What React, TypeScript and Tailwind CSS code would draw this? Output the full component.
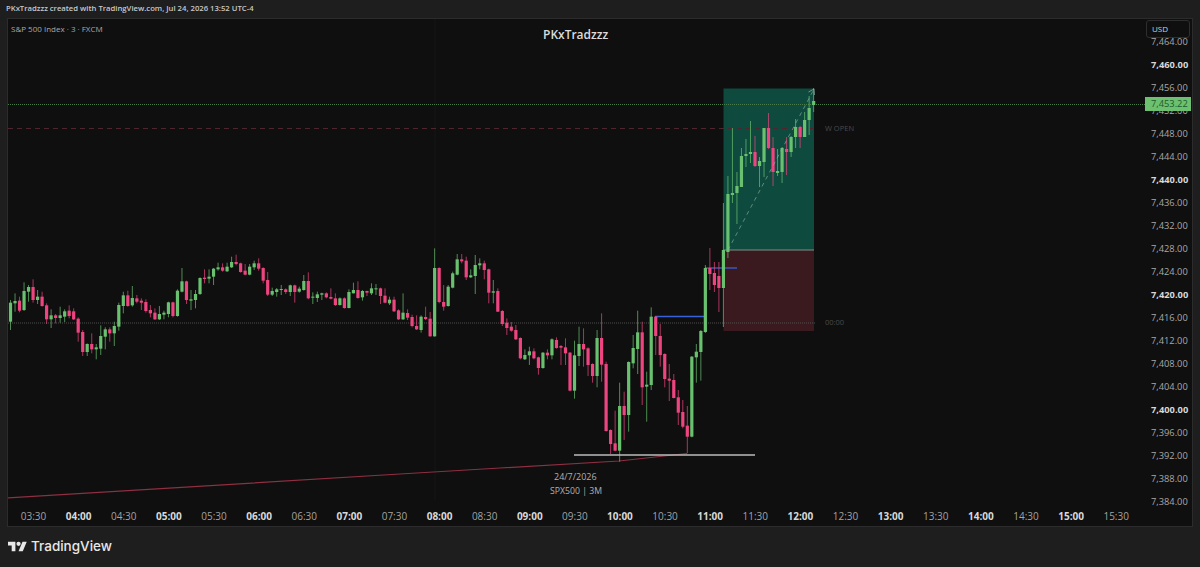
// [high, bodyTop, bodyBottom, low, up] in thirds of a pixel, from the y offset of each block
type Candle = [number, number, number, number, number];

const morning: Candle[] = [
	[245, 245, 265, 275, 1], [180, 188, 245, 270, 1], [160, 183, 190, 215, 1], [170, 182, 212, 217, 0],
	[127, 153, 210, 213, 1], [135, 141, 155, 185, 1], [118, 141, 180, 188, 0], [150, 170, 180, 192, 1],
	[155, 170, 198, 200, 0], [190, 196, 238, 252, 0], [208, 226, 238, 264, 1], [222, 226, 234, 250, 0],
	[200, 226, 234, 248, 1], [208, 214, 230, 246, 1], [196, 212, 228, 235, 0], [205, 214, 238, 240, 0],
	[232, 236, 278, 305, 0], [270, 276, 336, 348, 0], [310, 312, 336, 348, 1], [280, 312, 328, 340, 0],
	[312, 322, 328, 358, 1], [256, 288, 326, 345, 1], [262, 268, 290, 328, 1], [262, 268, 280, 305, 0],
	[245, 258, 280, 318, 1], [188, 195, 260, 272, 1], [155, 166, 198, 220, 1], [152, 166, 198, 200, 0],
	[138, 174, 196, 200, 1], [165, 175, 185, 190, 0], [175, 182, 188, 210, 0], [178, 186, 213, 218, 0],
	[195, 210, 220, 232, 0], [205, 218, 238, 240, 0], [198, 222, 238, 240, 1], [212, 218, 224, 238, 1],
	[185, 187, 222, 232, 1], [185, 187, 228, 232, 0], [148, 152, 228, 230, 1], [84, 124, 155, 157, 1],
	[122, 124, 180, 192, 0], [150, 178, 182, 210, 1], [150, 162, 180, 205, 1], [112, 114, 162, 165, 1],
	[88, 113, 117, 130, 0], [88, 110, 116, 130, 1], [84, 86, 110, 135, 1], [68, 82, 88, 92, 1],
	[70, 82, 92, 95, 0], [68, 80, 94, 96, 1], [50, 66, 82, 84, 1], [44, 66, 72, 76, 0],
	[68, 70, 96, 98, 0], [72, 92, 104, 106, 0], [72, 80, 104, 106, 1], [62, 70, 82, 90, 1],
	[55, 70, 86, 92, 0], [82, 84, 122, 130, 0], [96, 120, 164, 168, 0], [143, 153, 164, 168, 1],
	[144, 148, 156, 170, 1], [135, 147, 150, 165, 1], [145, 148, 156, 162, 0], [134, 136, 156, 168, 1],
	[134, 136, 156, 188, 0], [140, 146, 155, 158, 1], [105, 123, 150, 152, 1], [97, 123, 175, 178, 0],
	[157, 170, 172, 192, 1], [155, 163, 174, 186, 1], [158, 160, 164, 180, 1], [157, 160, 172, 175, 0],
	[145, 171, 176, 178, 0], [160, 175, 195, 198, 0], [172, 175, 195, 197, 1], [172, 175, 204, 206, 0],
	[148, 156, 204, 205, 1], [128, 150, 160, 160, 1], [124, 150, 174, 176, 0], [150, 153, 172, 182, 1],
	[152, 153, 158, 168, 0], [130, 145, 160, 165, 1], [132, 145, 147, 165, 1], [143, 145, 168, 192, 0],
	[145, 167, 188, 190, 0], [170, 179, 190, 195, 1], [170, 179, 214, 216, 0], [208, 211, 238, 240, 0],
	[160, 218, 238, 240, 1], [208, 219, 233, 240, 0], [224, 231, 258, 262, 0], [226, 258, 268, 270, 0],
	[226, 230, 270, 278, 1], [200, 231, 237, 240, 0], [216, 236, 289, 290, 0], [25, 84, 289, 290, 1],
	[82, 84, 186, 190, 0], [135, 186, 200, 212, 0], [135, 140, 198, 200, 1], [95, 100, 143, 145, 1],
	[42, 58, 104, 106, 1], [42, 58, 64, 70, 0], [50, 62, 112, 120, 0], [88, 106, 112, 114, 1],
	[45, 75, 108, 162, 1], [55, 70, 76, 88, 1], [62, 70, 90, 118, 0], [86, 88, 158, 190, 0],
	[120, 154, 158, 190, 1], [145, 153, 215, 216, 0],
];

const midday: Candle[] = [
	[30, 33, 72, 78, 0], [55, 68, 84, 105, 0], [66, 80, 92, 95, 0], [75, 90, 118, 120, 0],
	[112, 114, 175, 178, 0], [148, 165, 178, 180, 1], [140, 154, 166, 195, 1], [145, 154, 175, 178, 0],
	[170, 172, 204, 224, 0], [156, 158, 204, 206, 1], [148, 158, 166, 178, 0], [115, 118, 166, 178, 1],
	[112, 120, 144, 146, 0], [135, 138, 143, 195, 0], [115, 142, 160, 195, 0], [156, 158, 272, 274, 0],
	[122, 166, 272, 296, 1], [80, 132, 168, 198, 1], [85, 132, 148, 200, 0], [142, 145, 195, 228, 0],
	[190, 192, 228, 248, 0], [90, 114, 228, 262, 1], [40, 114, 194, 245, 0], [185, 192, 393, 395, 0],
	[388, 390, 432, 462, 0], [332, 430, 452, 454, 0], [248, 318, 452, 485, 1], [275, 318, 345, 420, 0],
	[184, 186, 345, 395, 1], [105, 144, 190, 205, 1], [32, 97, 147, 222, 1], [65, 97, 262, 315, 0],
	[215, 254, 260, 365, 1], [22, 50, 255, 270, 1], [48, 50, 108, 165, 0], [72, 108, 165, 200, 0],
	[160, 162, 237, 262, 0], [192, 236, 242, 303, 0], [222, 240, 294, 295, 0], [270, 292, 338, 375, 0],
	[300, 336, 380, 385, 0], [318, 377, 410, 460, 0], [168, 170, 410, 412, 1], [132, 155, 172, 248, 1],
	[90, 93, 156, 242, 1],
];

// from the breakout on, plain page pixels
const breakout: Candle[] = [
	[265, 268, 332, 333, 1], [248, 268, 274, 290, 0], [262, 273, 285, 292, 0], [262, 276, 288, 312, 0],
	[203, 250, 288, 327, 1], [176, 194, 252, 258, 1], [128, 193, 195, 203, 1], [172, 186, 193, 224, 1],
	[148, 156, 187, 187, 1], [139, 154, 156, 167, 1], [121, 152, 154, 163, 1], [136, 152, 166, 167, 0],
	[157, 161, 166, 187, 1], [128, 128, 162, 177, 1], [113, 128, 148, 149, 0], [137, 148, 172, 186, 0],
	[149, 171, 173, 176, 1], [147, 148, 172, 183, 1], [137, 149, 152, 175, 0], [136, 137, 152, 157, 1],
	[119, 127, 137, 148, 1], [126, 127, 137, 148, 0], [112, 120, 137, 137, 1], [96, 108, 120, 135, 1],
	[88, 101, 105, 112, 1],
];

const candles: Candle[] = [
	...morning.map((c): Candle => [240 + c[0] / 3, 240 + c[1] / 3, 240 + c[2] / 3, 240 + c[3] / 3, c[4]]),
	...midday.map((c): Candle => [300 + c[0] / 3, 300 + c[1] / 3, 300 + c[2] / 3, 300 + c[3] / 3, c[4]]),
	...breakout,
];

const prices = [
	"7,464.00", "7,460.00", "7,456.00", "7,452.00", "7,448.00", "7,444.00", "7,440.00",
	"7,436.00", "7,432.00", "7,428.00", "7,424.00", "7,420.00", "7,416.00", "7,412.00",
	"7,408.00", "7,404.00", "7,400.00", "7,396.00", "7,392.00", "7,388.00", "7,384.00",
];

const times = [
	"03:30", "04:00", "04:30", "05:00", "05:30", "06:00", "06:30", "07:00", "07:30", "08:00",
	"08:30", "09:00", "09:30", "10:00", "10:30", "11:00", "11:30", "12:00", "12:30", "13:00",
	"13:30", "14:00", "14:30", "15:00", "15:30",
];

function Chart() {
	return (
		<svg width="1137" height="481" viewBox="8 19 1137 481" className="block">
			<line x1="435" y1="19" x2="435" y2="500" stroke="#171717" />
			<rect x="723.5" y="88.5" width="90.5" height="161.5" fill="#0f4a3f" />
			<rect x="723.5" y="250" width="90.5" height="81" fill="#3a1a1e" />
			<line x1="723.5" y1="250" x2="814" y2="250" stroke="#7d8f88" />

			<line x1="8" y1="104.5" x2="1145" y2="104.5" stroke="#4a7a4a" strokeDasharray="1 1" />
			<line x1="8" y1="128.5" x2="815" y2="128.5" stroke="#4f2530" strokeDasharray="5 4" />
			<line x1="8" y1="323" x2="815" y2="323" stroke="#4f4f4f" strokeDasharray="1 1" />

			<line x1="655" y1="316.5" x2="705" y2="316.5" stroke="#3a62d8" strokeWidth="1.3" />
			<line x1="705" y1="268" x2="737" y2="268" stroke="#3a62d8" strokeWidth="1.3" />

			<polyline points="7,498 400,474 500,468 619,461 687,453.5" fill="none" stroke="#8e2f42" strokeWidth="1.2" />

			{candles.map((c, i) => {
				const x = 6 + i * 4.512;
				const color = c[4] ? "#69c06f" : "#ee4580";
				return (
					<g key={i} fill={color}>
						<rect x={x - 0.5} y={c[0]} width="1" height={c[3] - c[0]} opacity="0.7" />
						<rect x={x - 1.6} y={c[1]} width="3.2" height={Math.max(c[2] - c[1], 1)} />
					</g>
				);
			})}

			<line x1="728" y1="250" x2="813.5" y2="90" stroke="#8fb8a8" strokeDasharray="4 4" strokeOpacity="0.6" />
			<path d="M808.5 92 L814 89 L814.5 95" fill="none" stroke="#8fb8a8" strokeOpacity="0.7" />
			<line x1="574" y1="455" x2="755" y2="455" stroke="#bdbdbd" strokeWidth="1.4" />
		</svg>
	);
}

export default function App() {
	return (
		<div className="flex h-[567px] w-[1200px] flex-col overflow-hidden bg-[#1e1e1e] font-['Open_Sans',sans-serif]">
			<div className="flex h-[18px] items-center pl-[6px] text-[7.7px] font-semibold text-[#c8c8c8]">
				PKxTradzzz created with TradingView.com, Jul 24, 2026 13:52 UTC-4
			</div>

			<div className="relative mx-[7px] flex h-[509px] border border-[#2c2c2c] bg-[#0f0f0f]">
				<div className="relative flex w-[1137px] flex-col">
					<div className="h-[481px]">
						<Chart />
					</div>
					<div className="flex h-[26px] items-center pl-[3px] pt-[6px] text-[10px] text-[#a3a3a3]">
						{times.map((t) => (
							<span
								key={t}
								className={
									t.endsWith(":00")
										? "w-[45.12px] shrink-0 text-center font-bold text-[#d8d8d8]"
										: "w-[45.12px] shrink-0 text-center"
								}
							>
								{t}
							</span>
						))}
					</div>

					<span className="absolute left-[3px] top-[4px] text-[8px] text-[#a8a8a8]">
						S&amp;P 500 Index · 3 · FXCM
					</span>
					<span className="absolute left-[535px] top-[7px] text-[12px] font-semibold text-[#dcdcdc]">
						PKxTradzzz
					</span>
					<span className="absolute left-[817px] top-[104px] text-[7.5px] text-[#4a4a4a]">W OPEN</span>
					<span className="absolute left-[817px] top-[298px] text-[7.5px] text-[#4a4a4a]">00:00</span>
					<span className="absolute left-[546px] top-[451px] text-[9px] text-[#b0b0b0]">24/7/2026</span>
					<span className="absolute left-[542px] top-[466px] text-[8.7px] text-[#b0b0b0]">SPX500 | 3M</span>
				</div>

				<div className="relative flex-1 pl-[6px] pt-[11px] text-[9.3px] text-[#a8a8a8]">
					{prices.map((p, i) => (
						<div
							key={p}
							className={
								i % 5 === 1
									? "flex h-[23px] items-center font-bold text-[#d8d8d8]"
									: "flex h-[23px] items-center"
							}
						>
							{p}
						</div>
					))}
					<div className="absolute left-[1px] top-[1px] flex h-[18px] w-[44px] items-center rounded-[3px] border border-[#2e2e2e] bg-[#0f0f0f] pl-[5px] text-[8px] text-[#d0d0d0]">
						USD
					</div>
					<div className="absolute left-0 top-[78px] flex h-[14px] w-[46px] items-center bg-[#6cc070] pl-[6px] text-[#1d5a2c]">
						7,453.22
					</div>
				</div>
			</div>

			<div className="flex flex-1 items-center gap-[4px] pb-[1px] pl-[8px]">
				<svg width="19" height="11" viewBox="0 4 36 18" fill="#e8e8e8">
					<path d="M14 22H7V11H0V4h14v18zM28 22h-8l7.5-18h8L28 22z" />
					<circle cx="20" cy="8" r="4" />
				</svg>
				<span className="text-[13.5px] font-medium text-[#e8e8e8] font-['Inter',sans-serif]">TradingView</span>
			</div>
		</div>
	);
}
